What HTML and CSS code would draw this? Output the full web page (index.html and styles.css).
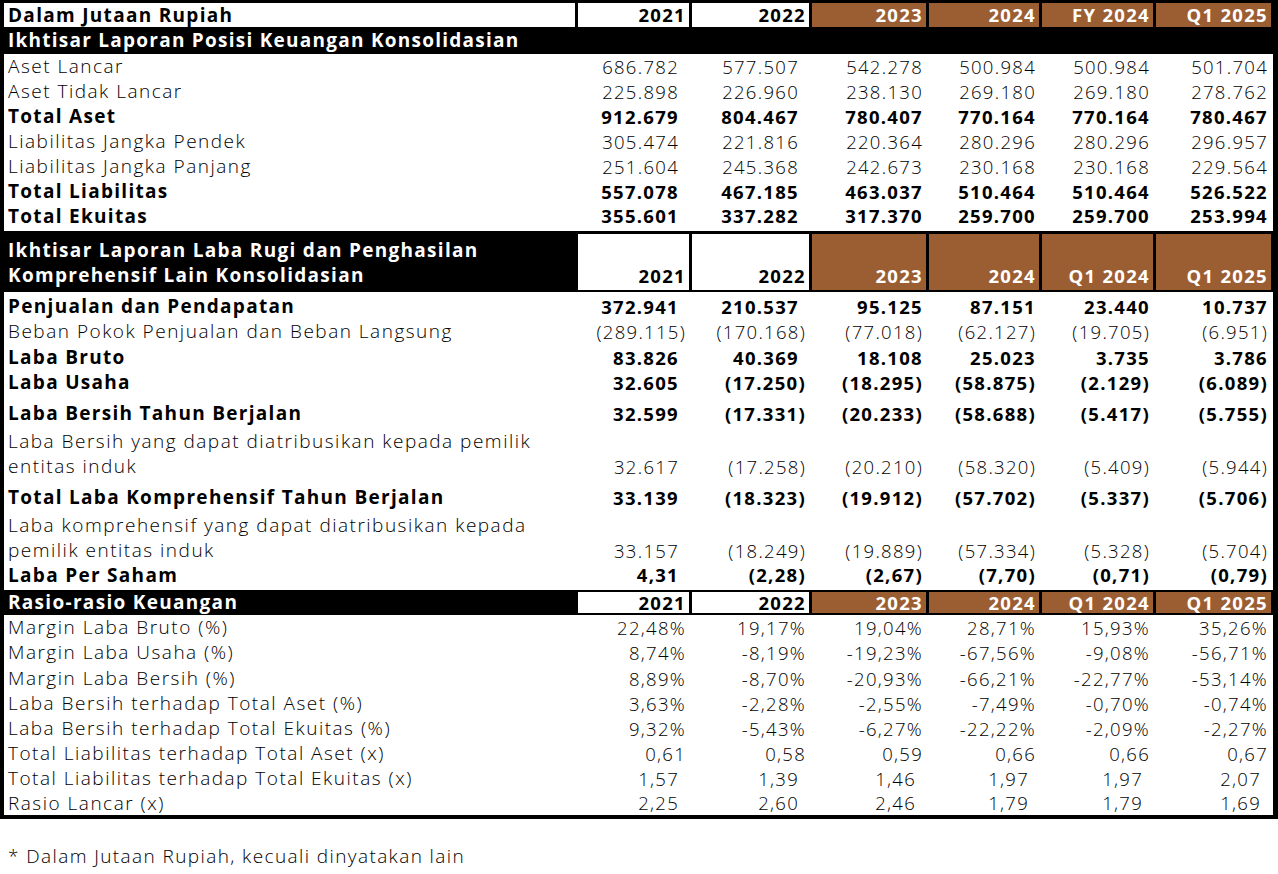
FILE: index.html
```html
<!DOCTYPE html>
<html lang="id">
<head>
<meta charset="utf-8">
<title>Ikhtisar Keuangan</title>
<link rel="stylesheet" href="styles.css">
</head>
<body>
<div class="sheet">
  <div class="grid hdr">
    <div class="lbl w">Dalam Jutaan Rupiah</div>
    <div class="w">2021</div>
    <div class="w">2022</div>
    <div class="br">2023</div>
    <div class="br">2024</div>
    <div class="br">FY 2024</div>
    <div class="br">Q1 2025</div>
  </div>
  <div class="band">Ikhtisar Laporan Posisi Keuangan Konsolidasian</div>
  <div class="block s1">
    <div class="grid row h25"><div class="lbl">Aset Lancar</div><div class="p">686.782</div><div class="p">577.507</div><div>542.278</div><div>500.984</div><div>500.984</div><div>501.704</div></div>
    <div class="grid row h25"><div class="lbl">Aset Tidak Lancar</div><div class="p">225.898</div><div class="p">226.960</div><div>238.130</div><div>269.180</div><div>269.180</div><div>278.762</div></div>
    <div class="grid row h25 b"><div class="lbl">Total Aset</div><div class="p">912.679</div><div class="p">804.467</div><div>780.407</div><div>770.164</div><div>770.164</div><div>780.467</div></div>
    <div class="grid row h25"><div class="lbl">Liabilitas Jangka Pendek</div><div class="p">305.474</div><div class="p">221.816</div><div>220.364</div><div>280.296</div><div>280.296</div><div>296.957</div></div>
    <div class="grid row h25"><div class="lbl">Liabilitas Jangka Panjang</div><div class="p">251.604</div><div class="p">245.368</div><div>242.673</div><div>230.168</div><div>230.168</div><div>229.564</div></div>
    <div class="grid row h25 b"><div class="lbl">Total Liabilitas</div><div class="p">557.078</div><div class="p">467.185</div><div>463.037</div><div>510.464</div><div>510.464</div><div>526.522</div></div>
    <div class="grid row h23 b"><div class="lbl">Total Ekuitas</div><div class="p">355.601</div><div class="p">337.282</div><div>317.370</div><div>259.700</div><div>259.700</div><div>253.994</div></div>
  </div>

  <div class="grid hdr2">
    <div class="lbl k">Ikhtisar Laporan Laba Rugi dan Penghasilan<br>Komprehensif Lain Konsolidasian</div>
    <div class="w">2021</div>
    <div class="w">2022</div>
    <div class="br">2023</div>
    <div class="br">2024</div>
    <div class="br">Q1 2024</div>
    <div class="br">Q1 2025</div>
  </div>
  <div class="block s2">
    <div class="grid row h27 b"><div class="lbl">Penjualan dan Pendapatan</div><div class="p">372.941</div><div class="p">210.537</div><div>95.125</div><div>87.151</div><div>23.440</div><div>10.737</div></div>
    <div class="grid row h25"><div class="lbl">Beban Pokok Penjualan dan Beban Langsung</div><div>(289.115)</div><div>(170.168)</div><div>(77.018)</div><div>(62.127)</div><div>(19.705)</div><div>(6.951)</div></div>
    <div class="grid row h26 b"><div class="lbl">Laba Bruto</div><div class="p">83.826</div><div class="p">40.369</div><div>18.108</div><div>25.023</div><div>3.735</div><div>3.786</div></div>
    <div class="grid row h25 b"><div class="lbl">Laba Usaha</div><div class="p">32.605</div><div>(17.250)</div><div>(18.295)</div><div>(58.875)</div><div>(2.129)</div><div>(6.089)</div></div>
    <div class="grid row h31 b"><div class="lbl">Laba Bersih Tahun Berjalan</div><div class="p">32.599</div><div>(17.331)</div><div>(20.233)</div><div>(58.688)</div><div>(5.417)</div><div>(5.755)</div></div>
    <div class="grid row h53"><div class="lbl">Laba Bersih yang dapat diatribusikan kepada pemilik<br>entitas induk</div><div class="p">32.617</div><div>(17.258)</div><div>(20.210)</div><div>(58.320)</div><div>(5.409)</div><div>(5.944)</div></div>
    <div class="grid row h31 b"><div class="lbl">Total Laba Komprehensif Tahun Berjalan</div><div class="p">33.139</div><div>(18.323)</div><div>(19.912)</div><div>(57.702)</div><div>(5.337)</div><div>(5.706)</div></div>
    <div class="grid row h53"><div class="lbl">Laba komprehensif yang dapat diatribusikan kepada<br>pemilik entitas induk</div><div class="p">33.157</div><div>(18.249)</div><div>(19.889)</div><div>(57.334)</div><div>(5.328)</div><div>(5.704)</div></div>
    <div class="grid row h23 b"><div class="lbl">Laba Per Saham</div><div class="p">4,31</div><div>(2,28)</div><div>(2,67)</div><div>(7,70)</div><div>(0,71)</div><div>(0,79)</div></div>
  </div>

  <div class="grid hdr3">
    <div class="lbl k">Rasio-rasio Keuangan</div>
    <div class="w">2021</div>
    <div class="w">2022</div>
    <div class="br">2023</div>
    <div class="br">2024</div>
    <div class="br">Q1 2024</div>
    <div class="br">Q1 2025</div>
  </div>
  <div class="block s3">
    <div class="grid row h25"><div class="lbl">Margin Laba Bruto (%)</div><div>22,48%</div><div>19,17%</div><div>19,04%</div><div>28,71%</div><div>15,93%</div><div>35,26%</div></div>
    <div class="grid row h25"><div class="lbl">Margin Laba Usaha (%)</div><div>8,74%</div><div>-8,19%</div><div>-19,23%</div><div>-67,56%</div><div>-9,08%</div><div>-56,71%</div></div>
    <div class="grid row h26"><div class="lbl">Margin Laba Bersih (%)</div><div>8,89%</div><div>-8,70%</div><div>-20,93%</div><div>-66,21%</div><div>-22,77%</div><div>-53,14%</div></div>
    <div class="grid row h25"><div class="lbl">Laba Bersih terhadap Total Aset (%)</div><div>3,63%</div><div>-2,28%</div><div>-2,55%</div><div>-7,49%</div><div>-0,70%</div><div>-0,74%</div></div>
    <div class="grid row h25"><div class="lbl">Laba Bersih terhadap Total Ekuitas (%)</div><div>9,32%</div><div>-5,43%</div><div>-6,27%</div><div>-22,22%</div><div>-2,09%</div><div>-2,27%</div></div>
    <div class="grid row h25"><div class="lbl">Total Liabilitas terhadap Total Aset (x)</div><div>0,61</div><div>0,58</div><div>0,59</div><div>0,66</div><div>0,66</div><div>0,67</div></div>
    <div class="grid row h25 xr"><div class="lbl">Total Liabilitas terhadap Total Ekuitas (x)</div><div>1,57</div><div>1,39</div><div>1,46</div><div>1,97</div><div>1,97</div><div>2,07</div></div>
    <div class="grid row h23 xr"><div class="lbl">Rasio Lancar (x)</div><div>2,25</div><div>2,60</div><div>2,46</div><div>1,79</div><div>1,79</div><div>1,69</div></div>
  </div>
</div>
<p class="note">* Dalam Jutaan Rupiah, kecuali dinyatakan lain</p>
</body>
</html>
```

FILE: styles.css
```css
* { box-sizing: border-box; }

body {
  margin: 0;
  background: #ffffff;
  color: #000000;
  font-family: "Open Sans", "Liberation Sans", sans-serif;
  font-size: 18.5px;
  font-weight: 300;
  letter-spacing: 1.3px;
}

.sheet {
  width: 1278px;
  background: #000000;
  padding: 3px 5px 4px 4px;
}

.grid {
  display: grid;
  grid-template-columns: 571px 111px 117px 114px 110px 111px 115px;
  column-gap: 3px;
  padding-right: 2px;
}

/* label text (wider setting than numbers) */
.lbl {
  font-size: 19px;
  letter-spacing: 1.5px;
}
.b .lbl,
.hdr > .lbl,
.hdr2 > .lbl,
.hdr3 > .lbl {
  letter-spacing: 1.3px;
}

/* header rows */
.hdr { height: 24px; }
.hdr > div {
  line-height: 24px;
  font-weight: 700;
  text-align: right;
  padding: 0 3px 0 4px;
  white-space: nowrap;
}
.hdr > .lbl, .hdr2 > .lbl, .hdr3 > .lbl { text-align: left; }

.hdr2 {
  height: 61px;
  padding-top: 3px;
  padding-bottom: 2px;
}
.hdr2 > div {
  display: flex;
  flex-direction: column;
  justify-content: flex-end;
  line-height: 25px;
  font-weight: 700;
  text-align: right;
  padding: 0 3px 2px 4px;
  white-space: nowrap;
}

.hdr3 {
  height: 25px;
  padding-top: 2px;
  padding-bottom: 2px;
}
.hdr3 > div {
  line-height: 21px;
  font-weight: 700;
  text-align: right;
  padding: 0 3px 0 4px;
  white-space: nowrap;
}

.w { background: #ffffff; color: #000000; }
.br { background: #9b5e33; color: #ffffff; }
.k { background: #000000; color: #ffffff; }

.band {
  height: 27px;
  line-height: 27px;
  color: #ffffff;
  font-weight: 700;
  font-size: 19px;
  letter-spacing: 1.25px;
  padding-left: 4px;
}

/* data blocks */
.block { background: #ffffff; }
.s1 { padding-bottom: 4px; }
.s2 { padding-bottom: 4px; }
.s3 { padding-bottom: 1px; }

.row { align-items: end; }
.row > div {
  line-height: 25px;
  text-align: right;
  padding-right: 3px;
  white-space: nowrap;
}
.row > .lbl { text-align: left; padding-left: 4px; }
.row > .p { padding-right: 10px; }
.xr > div { padding-right: 10px; }
.b { font-weight: 700; }

.h23 { height: 23px; }
.h23 > div { line-height: 22px; }
.h25 { height: 25px; }
.h26 { height: 26px; }
.h27 { height: 27px; }
.h31 { height: 31px; }
.h53 { height: 53px; }

.note {
  margin: 25px 0 0 8px;
  line-height: 25px;
  font-size: 19px;
  letter-spacing: 1.4px;
}
```
